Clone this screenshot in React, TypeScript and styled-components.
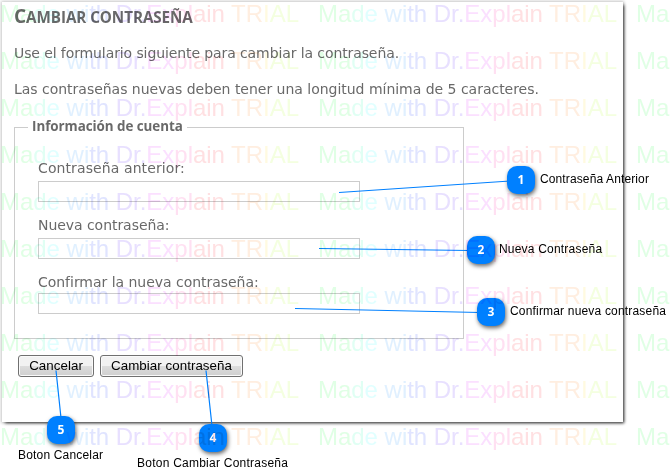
import React from "react";
import styled, { createGlobalStyle } from "styled-components";

const Global = createGlobalStyle`
  * { box-sizing: border-box; }
  body { margin: 0; background: #fff; overflow: hidden; }
`;

const Stage = styled.div`
  position: relative;
  width: 670px;
  height: 473px;
  padding: 2px 0 0 2px;
  overflow: hidden;
  background: #fff;
  font-family: "DejaVu Sans", Verdana, sans-serif;
  isolation: isolate;
`;

const Panel = styled.main`
  width: 621px;
  height: 420px;
  padding: 4px 12px 0;
  background: #fff;
  color: #696969;
  box-shadow: 2px 2px 3px -1px rgba(0, 0, 0, 0.8), 0 0 3px 1px rgba(0, 0, 0, 0.22);
`;

const Title = styled.h1`
  margin: 0;
  height: 21px;
  font: 700 15.2px/21px "Open Sans", "Noto Sans", sans-serif;
  text-transform: uppercase;
  letter-spacing: -0.05px;
  color: #696969;
  white-space: nowrap;

  &::first-letter {
    font-size: 19px;
  }
`;

const Text = styled.p<{ $gap: number; $spacing: number }>`
  margin: ${(p) => p.$gap}px 0 0;
  height: 20px;
  font-size: 14px;
  line-height: 20px;
  letter-spacing: ${(p) => p.$spacing}px;
  white-space: nowrap;
`;

const Group = styled.fieldset`
  width: 450px;
  height: 222px;
  margin: 18px 0 0;
  padding: 22px 23px 0;
  border: 1px solid #ccc;
`;

const Legend = styled.legend`
  height: 20px;
  margin-left: -10px;
  padding: 0 4px;
  font: 700 13.4px/18px "Open Sans", "Noto Sans", sans-serif;
  letter-spacing: -0.05px;
  white-space: nowrap;
`;

const Field = styled.label<{ $height: number; $spacing: number }>`
  display: flex;
  flex-direction: column;
  justify-content: space-between;
  height: ${(p) => p.$height}px;
  margin-bottom: 14px;
  font-size: 14px;
  line-height: 18px;
  letter-spacing: ${(p) => p.$spacing}px;
  white-space: nowrap;
`;

const Input = styled.input`
  display: block;
  width: 322px;
  height: 21px;
  padding: 0 4px;
  border: 1px solid #ccc;
  border-radius: 0;
  background: #fff;
`;

const Actions = styled.div`
  display: flex;
  gap: 6px;
  margin: 16px 0 0 4px;
`;

const Button = styled.button<{ $width: number }>`
  width: ${(p) => p.$width}px;
  height: 22px;
  padding: 0;
  border: 1px solid #707070;
  border-radius: 3px;
  box-shadow: inset 0 0 0 1px #fafafa;
  background: linear-gradient(#f2f2f2 0 48%, #dddddd 50%, #cfcfcf);
  font: 13.33px/20px "Liberation Sans", Arial, sans-serif;
  letter-spacing: 0.05px;
  color: #000;
  white-space: nowrap;
`;

const Connectors = styled.svg`
  position: absolute;
  inset: 0;
  pointer-events: none;
`;

const Pin = styled.div<{ $x: number; $y: number }>`
  position: absolute;
  left: ${(p) => p.$x}px;
  top: ${(p) => p.$y}px;
  width: 28px;
  height: 28px;
  border-radius: 10px;
  background: #0080ff;
  box-shadow: 1px 2px 4px rgba(0, 0, 0, 0.6);
  font: 700 12px/28px "Open Sans", "Noto Sans", sans-serif;
  text-align: center;
  color: #fff;
`;

const PinLabel = styled.div<{ $x: number; $y: number; $spacing: number }>`
  position: absolute;
  left: ${(p) => p.$x}px;
  top: ${(p) => p.$y}px;
  font: 12px/14px "Liberation Sans", Arial, sans-serif;
  letter-spacing: ${(p) => p.$spacing}px;
  white-space: nowrap;
  color: #000;
`;

const Watermark = styled.div`
  position: absolute;
  inset: 0;
  display: grid;
  grid-template-columns: repeat(3, 318px);
  grid-auto-rows: 47px;
  overflow: hidden;
  mix-blend-mode: multiply;
  pointer-events: none;
`;

const Mark = styled.span`
  font: 24px/27px "Liberation Sans", Arial, sans-serif;
  letter-spacing: -0.03px;
  white-space: pre;
`;

const Tint = styled.span<{ $color: string }>`
  color: ${(p) => p.$color};
`;

const tints: [string, string][] = [
  ["Ma", "#e0ffe5"],
  ["d", "#e0fff4"],
  ["e ", "#e0ffff"],
  ["wi", "#e0f0ff"],
  ["th ", "#e0e4ff"],
  ["Dr.", "#e8e0ff"],
  ["Ex", "#fbe0ff"],
  ["pl", "#ffe0f2"],
  ["ain ", "#ffe0e2"],
  ["TR", "#ffeee0"],
  ["I", "#fffae0"],
  ["AL", "#f4ffe0"],
];

const pins = [
  { n: 1, x: 507, y: 166, lx: 540, ly: 172, label: "Contraseña Anterior", s: 0.12 },
  { n: 2, x: 467, y: 236, lx: 499, ly: 242, label: "Nueva Contraseña", s: 0.2 },
  { n: 3, x: 477, y: 298, lx: 510, ly: 304, label: "Confirmar nueva contraseña", s: 0.18 },
  { n: 4, x: 199, y: 424, lx: 137, ly: 456, label: "Boton Cambiar Contraseña", s: 0.24 },
  { n: 5, x: 47, y: 416, lx: 18, ly: 448, label: "Boton Cancelar", s: 0.18 },
];

export default function App() {
  return (
    <Stage>
      <Global />
      <Panel>
        <Title>Cambiar contraseña</Title>
        <Text $gap={16} $spacing={-0.1}>Use el formulario siguiente para cambiar la contraseña.</Text>
        <Text $gap={16} $spacing={-0.02}>
          Las contraseñas nuevas deben tener una longitud mínima de 5 caracteres.
        </Text>
        <Group>
          <Legend>Información de cuenta</Legend>
          <Field $height={43} $spacing={0.1}>
            Contraseña anterior:
            <Input type="password" />
          </Field>
          <Field $height={43} $spacing={-0.05}>
            Nueva contraseña:
            <Input type="password" />
          </Field>
          <Field $height={41} $spacing={-0.03}>
            Confirmar la nueva contraseña:
            <Input type="password" />
          </Field>
        </Group>
        <Actions>
          <Button $width={76}>Cancelar</Button>
          <Button $width={143}>Cambiar contraseña</Button>
        </Actions>
      </Panel>
      <Connectors width="670" height="473" stroke="#0080ff" strokeWidth="1.2">
        <path d="M339 192.5L510 181M319 248.5L470 250.5M295 308.5L480 312.5M206 370.5L212 426M56 370.5L61 418" />
      </Connectors>
      {pins.map((p) => (
        <React.Fragment key={p.n}>
          <Pin $x={p.x} $y={p.y}>{p.n}</Pin>
          <PinLabel $x={p.lx} $y={p.ly} $spacing={p.s}>{p.label}</PinLabel>
        </React.Fragment>
      ))}
      <Watermark aria-hidden>
        {Array.from({ length: 33 }, (_, i) => (
          <Mark key={i}>
            {tints.map(([text, color]) => (
              <Tint key={text} $color={color}>{text}</Tint>
            ))}
          </Mark>
        ))}
      </Watermark>
    </Stage>
  );
}
